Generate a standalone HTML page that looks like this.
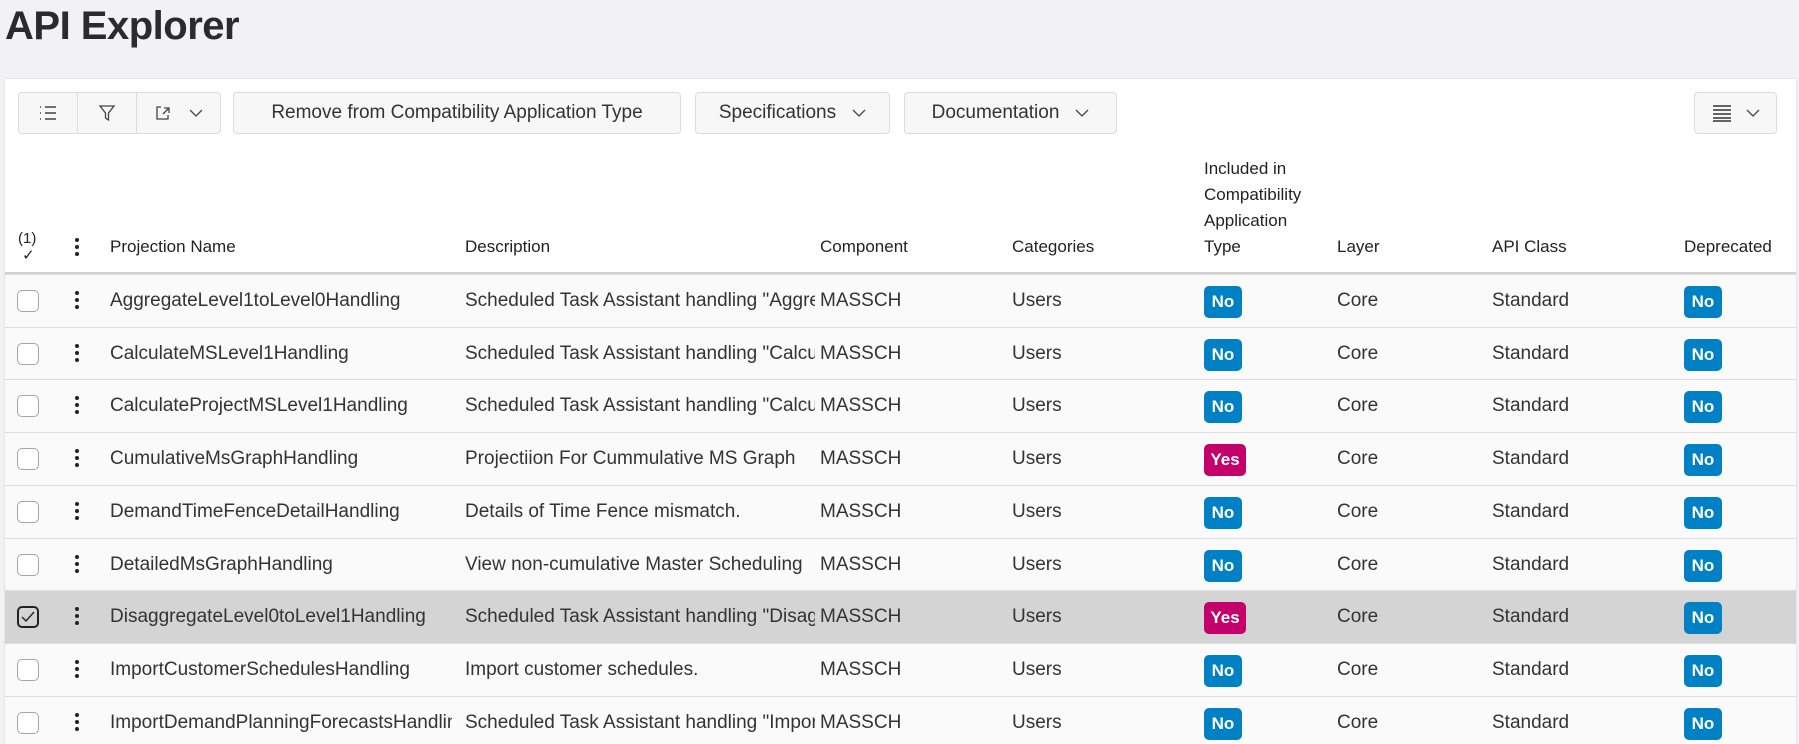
<!DOCTYPE html>
<html style="width:1799px;height:744px;overflow:hidden"><head><meta charset="utf-8"><style>
*{box-sizing:border-box;margin:0;padding:0}
body{width:1799px;height:744px;overflow:hidden;background:#f2f2f4;font-family:"Liberation Sans",sans-serif;color:#333;position:relative}
h1{position:absolute;left:5px;top:4px;font-size:40px;font-weight:bold;color:#2b2b2b;letter-spacing:-0.5px}
.card{position:absolute;left:5px;top:79px;width:1791px;height:665px;background:#fff;box-shadow:0 0 2px rgba(0,0,0,.15)}
.btn{position:absolute;top:92px;height:42px;border:1px solid #dcdcdc;border-radius:4px;background:#f7f7f7;font-size:19px;color:#333;display:flex;align-items:center;justify-content:center}
.seg{position:absolute;top:0;height:40px;display:flex;align-items:center;justify-content:center;border-right:1px solid #dcdcdc}
.hd{position:absolute;font-size:17px;color:#222;line-height:26px}
.row{position:absolute;left:5px;width:1791px;height:53px;border-top:1px solid #dedede;background:#fafafa;overflow:hidden}
.row.sel{background:#d4d4d4}
.c{position:absolute;top:0;height:52px;line-height:52px;font-size:19px;white-space:nowrap;overflow:hidden}
.cb{position:absolute;left:12px;top:15px;width:22px;height:22px;border:1.5px solid #a5a5a5;border-radius:5px;background:#fff}
.sel .cb{border:2px solid #222;background:transparent}
.dots{position:absolute;left:70px;top:16px;width:4px}
.dots i{display:block;width:4px;height:4px;border-radius:2px;background:#222;margin-bottom:3px}
.b{position:absolute;top:11px;height:32px;width:38px;border-radius:5px;background:#0081c6;color:#fff;font-weight:bold;font-size:17px;line-height:32px;text-align:center}
.b.y{background:#c4006b;width:42px}
</style></head><body>
<h1>API Explorer</h1>
<div class="card"></div>

<div class="btn" style="left:18px;width:203px">
 <div class="seg" style="left:0;width:59px"><svg width="20" height="16" viewBox="0 0 20 16" fill="none" stroke="#444" stroke-width="1.4"><path d="M2 2h1M2 8h1M2 14h1M7 2h11M7 8h11M7 14h11"/></svg></div>
 <div class="seg" style="left:59px;width:59px"><svg width="18" height="18" viewBox="0 0 18 18" fill="none" stroke="#444" stroke-width="1.3"><path d="M2 2h14l-5.5 7v7l-3-2V9z"/></svg></div>
 <div class="seg" style="left:118px;width:83px;border-right:none"><svg width="16" height="16" viewBox="0 0 16 16" fill="none" stroke="#444" stroke-width="1.3"><path d="M6 2H2v12h11V10M8 9l6-6M9 3h5v5"/></svg><svg style="margin-left:18px" width="14" height="10" viewBox="0 0 14 10" fill="none" stroke="#444" stroke-width="1.3"><path d="M1 2l6 6 6-6"/></svg></div>
</div>
<div class="btn" style="left:233px;width:448px">Remove from Compatibility Application Type</div>
<div class="btn" style="left:695px;width:195px">Specifications<svg style="margin-left:16px" width="14" height="10" viewBox="0 0 14 10" fill="none" stroke="#444" stroke-width="1.3"><path d="M1 2l6 6 6-6"/></svg></div>
<div class="btn" style="left:904px;width:213px">Documentation<svg style="margin-left:16px" width="14" height="10" viewBox="0 0 14 10" fill="none" stroke="#444" stroke-width="1.3"><path d="M1 2l6 6 6-6"/></svg></div>
<div class="btn" style="left:1694px;width:83px"><svg width="20" height="18" viewBox="0 0 20 18" fill="none" stroke="#333" stroke-width="1.4"><path d="M1 2h18M1 6h18M1 10h18M1 14h18M1 17h18"/></svg><svg style="margin-left:14px" width="14" height="10" viewBox="0 0 14 10" fill="none" stroke="#444" stroke-width="1.3"><path d="M1 2l6 6 6-6"/></svg></div>

<div class="hd" style="left:18px;top:230px;font-size:15px;line-height:17px">(1)<br>&nbsp;✓</div>
<div class="dots" style="top:238px;left:75px"><i></i><i></i><i></i></div>
<div class="hd" style="left:110px;top:234px">Projection Name</div>
<div class="hd" style="left:465px;top:234px">Description</div>
<div class="hd" style="left:820px;top:234px">Component</div>
<div class="hd" style="left:1012px;top:234px">Categories</div>
<div class="hd" style="left:1204px;top:156px">Included in<br>Compatibility<br>Application<br>Type</div>
<div class="hd" style="left:1337px;top:234px">Layer</div>
<div class="hd" style="left:1492px;top:234px">API Class</div>
<div class="hd" style="left:1684px;top:234px">Deprecated</div>
<div style="position:absolute;left:5px;top:272px;width:1791px;height:2px;background:#d0d0d0"></div>

<div class="row" style="top:274px"><div class="cb"></div><div class="dots"><i></i><i></i><i></i></div><div class="c" style="left:105px;width:342px">AggregateLevel1toLevel0Handling</div><div class="c" style="left:460px;width:350px">Scheduled Task Assistant handling "Aggregate</div><div class="c" style="left:815px">MASSCH</div><div class="c" style="left:1007px">Users</div><div class="b" style="left:1199px">No</div><div class="c" style="left:1332px">Core</div><div class="c" style="left:1487px">Standard</div><div class="b" style="left:1679px">No</div></div>
<div class="row" style="top:326.7px"><div class="cb"></div><div class="dots"><i></i><i></i><i></i></div><div class="c" style="left:105px;width:342px">CalculateMSLevel1Handling</div><div class="c" style="left:460px;width:350px">Scheduled Task Assistant handling "Calculate</div><div class="c" style="left:815px">MASSCH</div><div class="c" style="left:1007px">Users</div><div class="b" style="left:1199px">No</div><div class="c" style="left:1332px">Core</div><div class="c" style="left:1487px">Standard</div><div class="b" style="left:1679px">No</div></div>
<div class="row" style="top:379.4px"><div class="cb"></div><div class="dots"><i></i><i></i><i></i></div><div class="c" style="left:105px;width:342px">CalculateProjectMSLevel1Handling</div><div class="c" style="left:460px;width:350px">Scheduled Task Assistant handling "Calculate</div><div class="c" style="left:815px">MASSCH</div><div class="c" style="left:1007px">Users</div><div class="b" style="left:1199px">No</div><div class="c" style="left:1332px">Core</div><div class="c" style="left:1487px">Standard</div><div class="b" style="left:1679px">No</div></div>
<div class="row" style="top:432.1px"><div class="cb"></div><div class="dots"><i></i><i></i><i></i></div><div class="c" style="left:105px;width:342px">CumulativeMsGraphHandling</div><div class="c" style="left:460px;width:350px">Projectiion For Cummulative MS Graph</div><div class="c" style="left:815px">MASSCH</div><div class="c" style="left:1007px">Users</div><div class="b y" style="left:1199px">Yes</div><div class="c" style="left:1332px">Core</div><div class="c" style="left:1487px">Standard</div><div class="b" style="left:1679px">No</div></div>
<div class="row" style="top:484.8px"><div class="cb"></div><div class="dots"><i></i><i></i><i></i></div><div class="c" style="left:105px;width:342px">DemandTimeFenceDetailHandling</div><div class="c" style="left:460px;width:350px">Details of Time Fence mismatch.</div><div class="c" style="left:815px">MASSCH</div><div class="c" style="left:1007px">Users</div><div class="b" style="left:1199px">No</div><div class="c" style="left:1332px">Core</div><div class="c" style="left:1487px">Standard</div><div class="b" style="left:1679px">No</div></div>
<div class="row" style="top:537.5px"><div class="cb"></div><div class="dots"><i></i><i></i><i></i></div><div class="c" style="left:105px;width:342px">DetailedMsGraphHandling</div><div class="c" style="left:460px;width:350px">View non-cumulative Master Scheduling</div><div class="c" style="left:815px">MASSCH</div><div class="c" style="left:1007px">Users</div><div class="b" style="left:1199px">No</div><div class="c" style="left:1332px">Core</div><div class="c" style="left:1487px">Standard</div><div class="b" style="left:1679px">No</div></div>
<div class="row sel" style="top:590.2px"><div class="cb"><svg width="18" height="18" viewBox="0 0 18 18" fill="none" stroke="#222" stroke-width="1.4" style="position:absolute;left:0;top:0"><path d="M3 9l4 4 8-9"/></svg></div><div class="dots"><i></i><i></i><i></i></div><div class="c" style="left:105px;width:342px">DisaggregateLevel0toLevel1Handling</div><div class="c" style="left:460px;width:350px">Scheduled Task Assistant handling "Disaggregate</div><div class="c" style="left:815px">MASSCH</div><div class="c" style="left:1007px">Users</div><div class="b y" style="left:1199px">Yes</div><div class="c" style="left:1332px">Core</div><div class="c" style="left:1487px">Standard</div><div class="b" style="left:1679px">No</div></div>
<div class="row" style="top:642.9px"><div class="cb"></div><div class="dots"><i></i><i></i><i></i></div><div class="c" style="left:105px;width:342px">ImportCustomerSchedulesHandling</div><div class="c" style="left:460px;width:350px">Import customer schedules.</div><div class="c" style="left:815px">MASSCH</div><div class="c" style="left:1007px">Users</div><div class="b" style="left:1199px">No</div><div class="c" style="left:1332px">Core</div><div class="c" style="left:1487px">Standard</div><div class="b" style="left:1679px">No</div></div>
<div class="row" style="top:695.6px;height:48.4px"><div class="cb"></div><div class="dots"><i></i><i></i><i></i></div><div class="c" style="left:105px;width:342px">ImportDemandPlanningForecastsHandling</div><div class="c" style="left:460px;width:350px">Scheduled Task Assistant handling "Import</div><div class="c" style="left:815px">MASSCH</div><div class="c" style="left:1007px">Users</div><div class="b" style="left:1199px">No</div><div class="c" style="left:1332px">Core</div><div class="c" style="left:1487px">Standard</div><div class="b" style="left:1679px">No</div></div>
</body></html>
